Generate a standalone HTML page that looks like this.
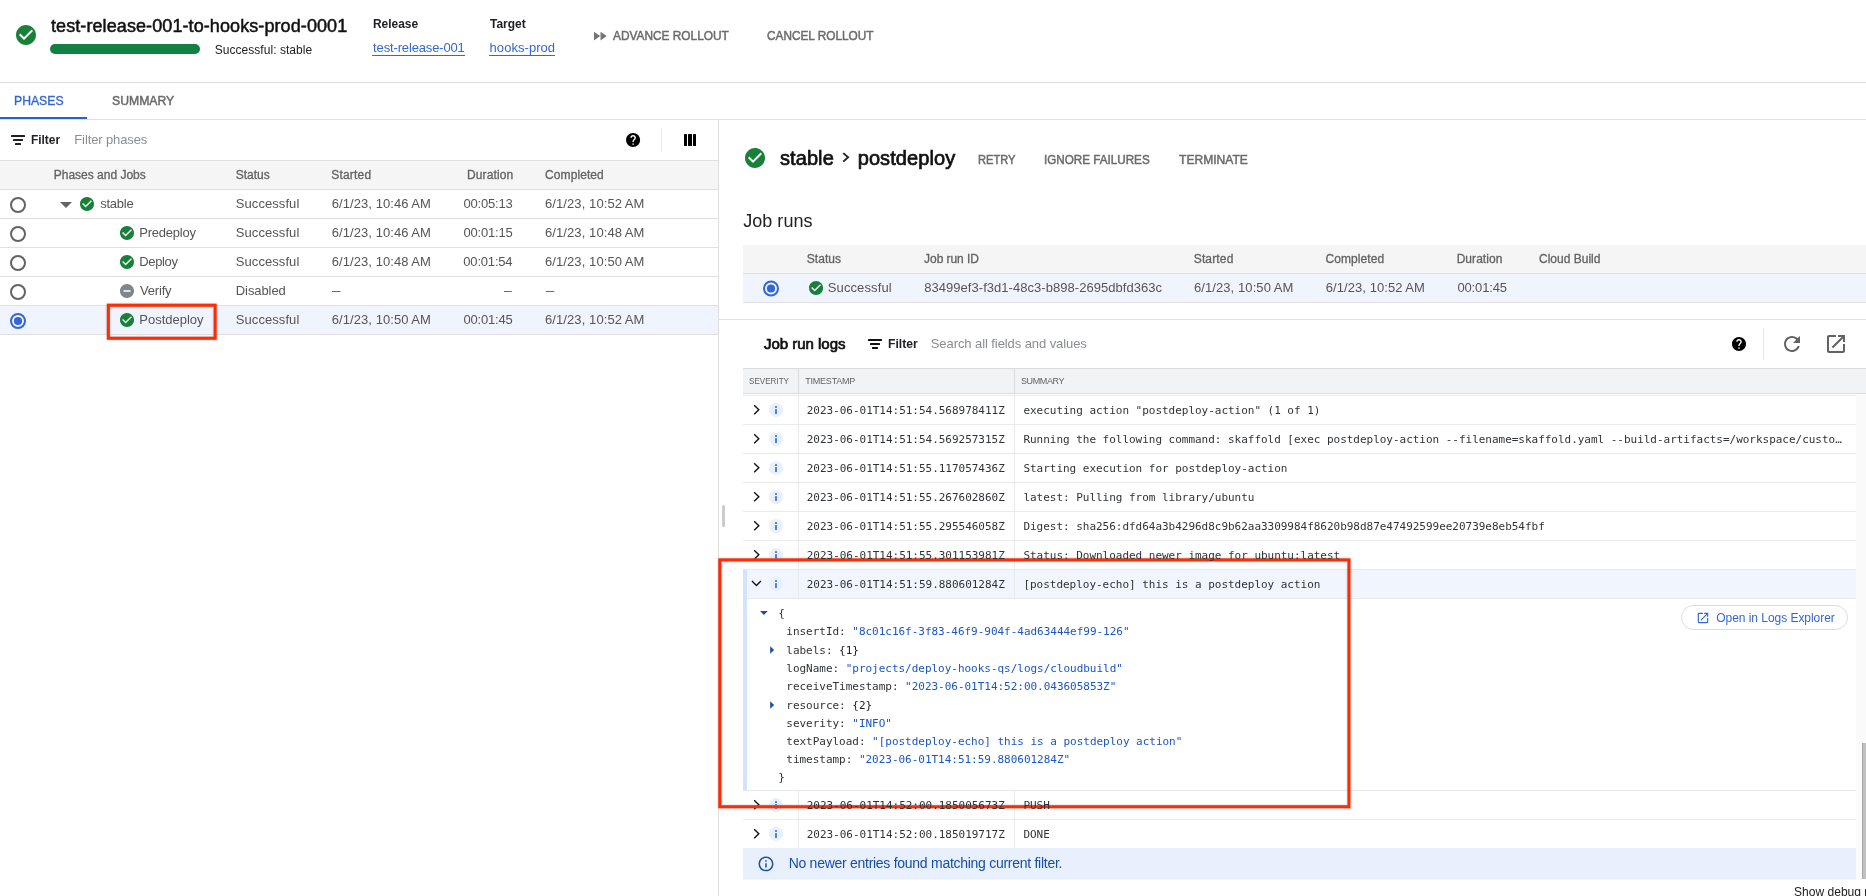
<!DOCTYPE html>
<html lang="en"><head><meta charset="utf-8"><title>Rollout details</title>
<style>
html,body{margin:0;padding:0;background:#fff;}
body{width:1866px;height:896px;overflow:hidden;position:relative;font-family:"Liberation Sans", sans-serif;}
#app{will-change:transform;position:absolute;left:0;top:0;width:1866px;height:896px;overflow:hidden;}
#app div,#app svg,#app span,#app a{position:absolute;}
#app span,#app a{white-space:pre;line-height:20px;text-decoration:none;}
.m{font-family:"DejaVu Sans Mono", "Liberation Mono", monospace;}
</style></head><body><div id="app">
<svg style="left:14px;top:23px" width="25" height="25"><path fill="#188038" transform="translate(0.00 0.00) scale(1.0000)" d="M12 2C6.48 2 2 6.48 2 12s4.48 10 10 10 10-4.48 10-10S17.52 2 12 2zm-2 15l-5-5 1.41-1.41L10 14.17l7.59-7.59L19 8l-9 9z"/></svg>
<div style="left:50px;top:44px;width:150px;height:10px;background:#128042;border-radius:5px;"></div>
<div style="left:372px;top:55px;width:93px;height:1px;background:#3367d6;"></div>
<div style="left:489px;top:55px;width:66px;height:1px;background:#3367d6;"></div>
<svg style="left:591px;top:27px" width="19" height="19"><path fill="#757575" transform="translate(0.05 0.35) scale(0.7292)" d="M4 18l8.5-6L4 6v12zm9-12v12l8.5-6L13 6z"/></svg>
<div style="left:0px;top:82px;width:1866px;height:1px;background:#e0e0e0;"></div>
<div style="left:0px;top:119px;width:1866px;height:1px;background:#e0e0e0;"></div>
<div style="left:0px;top:117px;width:87px;height:2px;background:#2b5ed3;"></div>
<div style="left:718px;top:120px;width:1px;height:776px;background:#e0e0e0;"></div>
<div style="left:11px;top:135px;width:14px;height:2px;background:#202124;border-radius:0.5px;"></div>
<div style="left:13px;top:139px;width:10px;height:2px;background:#202124;border-radius:0.5px;"></div>
<div style="left:15px;top:143px;width:6px;height:2px;background:#202124;border-radius:0.5px;"></div>
<svg style="left:624px;top:131px" width="18" height="18"><path fill="#000" transform="translate(0.70 0.55) scale(0.7000)" d="M12 2C6.48 2 2 6.48 2 12s4.48 10 10 10 10-4.48 10-10S17.52 2 12 2zm1 17h-2v-2h2v2zm2.07-7.75l-.9.92C13.45 12.9 13 13.5 13 15h-2v-.5c0-1.1.45-2.1 1.17-2.83l1.24-1.26c.37-.36.59-.86.59-1.41 0-1.1-.9-2-2-2s-2 .9-2 2H8c0-2.21 1.79-4 4-4s4 1.79 4 4c0 .88-.36 1.68-.93 2.25z"/></svg>
<div style="left:661px;top:128px;width:1px;height:24px;background:#ebebeb;"></div>
<div style="left:684px;top:134px;width:3px;height:12px;background:#000;border-radius:0.5px;"></div>
<div style="left:688px;top:134px;width:4px;height:12px;background:#000;border-radius:0.5px;"></div>
<div style="left:693px;top:134px;width:3px;height:12px;background:#000;border-radius:0.5px;"></div>
<div style="left:0px;top:160px;width:718px;height:30px;background:#f5f5f5;box-sizing:border-box;border-top:1px solid #e0e0e0;border-bottom:1px solid #e0e0e0;"></div>
<div style="left:0px;top:306px;width:718px;height:28px;background:#f0f4fe;"></div>
<div style="left:0px;top:218px;width:718px;height:1px;background:#e0e0e0;"></div>
<div style="left:0px;top:247px;width:718px;height:1px;background:#e0e0e0;"></div>
<div style="left:0px;top:276px;width:718px;height:1px;background:#e0e0e0;"></div>
<div style="left:0px;top:305px;width:718px;height:1px;background:#e0e0e0;"></div>
<div style="left:0px;top:334px;width:718px;height:1px;background:#e0e0e0;"></div>
<svg style="left:9px;top:196px" width="19" height="19"><circle cx="9.00" cy="9.00" r="7" fill="none" stroke="#636363" stroke-width="2"/></svg>
<svg style="left:78px;top:195px" width="18" height="18"><path fill="#188038" transform="translate(0.60 0.60) scale(0.7000)" d="M12 2C6.48 2 2 6.48 2 12s4.48 10 10 10 10-4.48 10-10S17.52 2 12 2zm-2 15l-5-5 1.41-1.41L10 14.17l7.59-7.59L19 8l-9 9z"/></svg>
<svg style="left:9px;top:225px" width="19" height="19"><circle cx="9.00" cy="9.00" r="7" fill="none" stroke="#636363" stroke-width="2"/></svg>
<svg style="left:118px;top:224px" width="18" height="18"><path fill="#188038" transform="translate(0.60 0.60) scale(0.7000)" d="M12 2C6.48 2 2 6.48 2 12s4.48 10 10 10 10-4.48 10-10S17.52 2 12 2zm-2 15l-5-5 1.41-1.41L10 14.17l7.59-7.59L19 8l-9 9z"/></svg>
<svg style="left:9px;top:254px" width="19" height="19"><circle cx="9.00" cy="9.00" r="7" fill="none" stroke="#636363" stroke-width="2"/></svg>
<svg style="left:118px;top:253px" width="18" height="18"><path fill="#188038" transform="translate(0.60 0.60) scale(0.7000)" d="M12 2C6.48 2 2 6.48 2 12s4.48 10 10 10 10-4.48 10-10S17.52 2 12 2zm-2 15l-5-5 1.41-1.41L10 14.17l7.59-7.59L19 8l-9 9z"/></svg>
<svg style="left:9px;top:283px" width="19" height="19"><circle cx="9.00" cy="9.00" r="7" fill="none" stroke="#636363" stroke-width="2"/></svg>
<svg style="left:118px;top:282px" width="18" height="18"><path fill="#80868b" transform="translate(0.60 0.60) scale(0.7000)" d="M12 2C6.48 2 2 6.48 2 12s4.48 10 10 10 10-4.48 10-10S17.52 2 12 2zm5 11H7v-2h10v2z"/></svg>
<svg style="left:9px;top:312px" width="19" height="19"><circle cx="9.00" cy="9.00" r="7" fill="none" stroke="#3367d6" stroke-width="2"/><circle cx="9.00" cy="9.00" r="4.1" fill="#3367d6"/></svg>
<svg style="left:118px;top:311px" width="18" height="18"><path fill="#188038" transform="translate(0.60 0.60) scale(0.7000)" d="M12 2C6.48 2 2 6.48 2 12s4.48 10 10 10 10-4.48 10-10S17.52 2 12 2zm-2 15l-5-5 1.41-1.41L10 14.17l7.59-7.59L19 8l-9 9z"/></svg>
<svg style="left:59px;top:201px" width="15" height="9"><polygon fill="#636363" points="1.00,1.00 13.00,1.00 7.00,7.00"/></svg>
<svg style="left:102px;top:299px;filter:drop-shadow(0.8px 0.8px 1px rgba(70,100,130,.35))" width="120" height="46"><rect x="6.35" y="6.25" width="106.80" height="33.00" fill="none" stroke="#fd2d03" stroke-width="3.1"/></svg>
<svg style="left:743px;top:146px" width="25" height="25"><path fill="#188038" transform="translate(0.00 0.00) scale(1.0000)" d="M12 2C6.48 2 2 6.48 2 12s4.48 10 10 10 10-4.48 10-10S17.52 2 12 2zm-2 15l-5-5 1.41-1.41L10 14.17l7.59-7.59L19 8l-9 9z"/></svg>
<svg style="left:841px;top:151px" width="10" height="13"><polygon fill="#202124" points="1.60,2.70 2.90,1.40 8.50,6.30 2.90,11.20 1.60,9.90 5.70,6.30"/></svg>
<div style="left:743px;top:245px;width:1123px;height:29px;background:#f5f5f5;box-sizing:border-box;border-bottom:1px solid #e0e0e0;"></div>
<div style="left:743px;top:274px;width:1123px;height:29px;background:#f0f4fe;box-sizing:border-box;border-bottom:1px solid #e0e0e0;"></div>
<svg style="left:762px;top:279px" width="19" height="19"><circle cx="9.00" cy="9.50" r="7" fill="none" stroke="#3367d6" stroke-width="2"/><circle cx="9.00" cy="9.50" r="4.1" fill="#3367d6"/></svg>
<svg style="left:807px;top:279px" width="18" height="18"><path fill="#188038" transform="translate(0.65 0.55) scale(0.7000)" d="M12 2C6.48 2 2 6.48 2 12s4.48 10 10 10 10-4.48 10-10S17.52 2 12 2zm-2 15l-5-5 1.41-1.41L10 14.17l7.59-7.59L19 8l-9 9z"/></svg>
<div style="left:719px;top:319px;width:1147px;height:1px;background:#e0e0e0;"></div>
<div style="left:868px;top:339px;width:14px;height:2px;background:#111;border-radius:0.5px;"></div>
<div style="left:870px;top:343px;width:10px;height:2px;background:#111;border-radius:0.5px;"></div>
<div style="left:872px;top:347px;width:6px;height:2px;background:#111;border-radius:0.5px;"></div>
<svg style="left:1730px;top:335px" width="18" height="18"><path fill="#000" transform="translate(0.60 0.55) scale(0.7000)" d="M12 2C6.48 2 2 6.48 2 12s4.48 10 10 10 10-4.48 10-10S17.52 2 12 2zm1 17h-2v-2h2v2zm2.07-7.75l-.9.92C13.45 12.9 13 13.5 13 15h-2v-.5c0-1.1.45-2.1 1.17-2.83l1.24-1.26c.37-.36.59-.86.59-1.41 0-1.1-.9-2-2-2s-2 .9-2 2H8c0-2.21 1.79-4 4-4s4 1.79 4 4c0 .88-.36 1.68-.93 2.25z"/></svg>
<div style="left:1763px;top:328px;width:1px;height:32px;background:#ebebeb;"></div>
<svg style="left:1780px;top:332px" width="25" height="25"><path fill="#636363" transform="translate(0.00 0.00) scale(1.0000)" d="M17.65 6.35C16.2 4.9 14.21 4 12 4c-4.42 0-7.99 3.58-7.99 8s3.57 8 7.99 8c3.73 0 6.84-2.55 7.73-6h-2.08c-.82 2.33-3.04 4-5.65 4-3.31 0-6-2.69-6-6s2.69-6 6-6c1.66 0 3.14.69 4.22 1.78L13 11h7V4l-2.35 2.35z"/></svg>
<svg style="left:1824px;top:332px" width="25" height="25"><path fill="#636363" transform="translate(0.00 0.00) scale(1.0000)" d="M19 19H5V5h7V3H5c-1.11 0-2 .9-2 2v14c0 1.1.89 2 2 2h14c1.1 0 2-.9 2-2v-7h-2v7zM14 3v2h3.59l-9.83 9.83 1.41 1.41L19 6.41V10h2V3h-7z"/></svg>
<div style="left:743px;top:368px;width:1123px;height:26px;background:#f1f3f4;box-sizing:border-box;border-top:1px solid #dadce0;border-bottom:1px solid #dadce0;"></div>
<div style="left:798px;top:369px;width:1px;height:24px;background:#dadce0;"></div>
<div style="left:1014px;top:369px;width:1px;height:24px;background:#dadce0;"></div>
<div style="left:743px;top:395px;width:1113px;height:1px;background:#e8eaed;"></div>
<div style="left:1856px;top:395px;width:10px;height:485px;background:#fafafa;"></div>
<div style="left:722px;top:505px;width:3px;height:22px;background:#cccccc;border-radius:1.5px;"></div>
<div style="left:1862px;top:743px;width:4px;height:136px;background:#c1c1c1;box-sizing:border-box;border-left:1px solid #a6a6a6;"></div>
<div style="left:743px;top:569px;width:1113px;height:29px;background:#f1f5fe;"></div>
<div style="left:743px;top:424px;width:1113px;height:1px;background:#e8eaed;"></div>
<div style="left:798px;top:396px;width:1px;height:28px;background:#e8eaed;"></div>
<div style="left:1014px;top:396px;width:1px;height:28px;background:#e8eaed;"></div>
<svg style="left:752px;top:403px" width="9" height="14"><polyline fill="none" stroke="#111" stroke-width="1.4" points="2.20,2.30 6.80,6.75 2.20,11.20"/></svg>
<div style="left:768.75px;top:402.75px;width:14.5px;height:14.5px;border-radius:50%;background:#e8f0fe"></div>
<div style="left:775px;top:406px;width:2px;height:2px;background:#4a80e4;border-radius:0.5px;"></div>
<div style="left:775px;top:409px;width:2px;height:5px;background:#4a80e4;border-radius:0.5px;"></div>
<div style="left:743px;top:453px;width:1113px;height:1px;background:#e8eaed;"></div>
<div style="left:798px;top:425px;width:1px;height:28px;background:#e8eaed;"></div>
<div style="left:1014px;top:425px;width:1px;height:28px;background:#e8eaed;"></div>
<svg style="left:752px;top:432px" width="9" height="14"><polyline fill="none" stroke="#111" stroke-width="1.4" points="2.20,2.30 6.80,6.75 2.20,11.20"/></svg>
<div style="left:768.75px;top:431.75px;width:14.5px;height:14.5px;border-radius:50%;background:#e8f0fe"></div>
<div style="left:775px;top:435px;width:2px;height:2px;background:#4a80e4;border-radius:0.5px;"></div>
<div style="left:775px;top:438px;width:2px;height:5px;background:#4a80e4;border-radius:0.5px;"></div>
<div style="left:743px;top:482px;width:1113px;height:1px;background:#e8eaed;"></div>
<div style="left:798px;top:454px;width:1px;height:28px;background:#e8eaed;"></div>
<div style="left:1014px;top:454px;width:1px;height:28px;background:#e8eaed;"></div>
<svg style="left:752px;top:461px" width="9" height="14"><polyline fill="none" stroke="#111" stroke-width="1.4" points="2.20,2.30 6.80,6.75 2.20,11.20"/></svg>
<div style="left:768.75px;top:460.75px;width:14.5px;height:14.5px;border-radius:50%;background:#e8f0fe"></div>
<div style="left:775px;top:464px;width:2px;height:2px;background:#4a80e4;border-radius:0.5px;"></div>
<div style="left:775px;top:467px;width:2px;height:5px;background:#4a80e4;border-radius:0.5px;"></div>
<div style="left:743px;top:511px;width:1113px;height:1px;background:#e8eaed;"></div>
<div style="left:798px;top:483px;width:1px;height:28px;background:#e8eaed;"></div>
<div style="left:1014px;top:483px;width:1px;height:28px;background:#e8eaed;"></div>
<svg style="left:752px;top:490px" width="9" height="14"><polyline fill="none" stroke="#111" stroke-width="1.4" points="2.20,2.30 6.80,6.75 2.20,11.20"/></svg>
<div style="left:768.75px;top:489.75px;width:14.5px;height:14.5px;border-radius:50%;background:#e8f0fe"></div>
<div style="left:775px;top:493px;width:2px;height:2px;background:#4a80e4;border-radius:0.5px;"></div>
<div style="left:775px;top:496px;width:2px;height:5px;background:#4a80e4;border-radius:0.5px;"></div>
<div style="left:743px;top:540px;width:1113px;height:1px;background:#e8eaed;"></div>
<div style="left:798px;top:512px;width:1px;height:28px;background:#e8eaed;"></div>
<div style="left:1014px;top:512px;width:1px;height:28px;background:#e8eaed;"></div>
<svg style="left:752px;top:519px" width="9" height="14"><polyline fill="none" stroke="#111" stroke-width="1.4" points="2.20,2.30 6.80,6.75 2.20,11.20"/></svg>
<div style="left:768.75px;top:518.75px;width:14.5px;height:14.5px;border-radius:50%;background:#e8f0fe"></div>
<div style="left:775px;top:522px;width:2px;height:2px;background:#4a80e4;border-radius:0.5px;"></div>
<div style="left:775px;top:525px;width:2px;height:5px;background:#4a80e4;border-radius:0.5px;"></div>
<div style="left:743px;top:569px;width:1113px;height:1px;background:#e8eaed;"></div>
<div style="left:798px;top:541px;width:1px;height:28px;background:#e8eaed;"></div>
<div style="left:1014px;top:541px;width:1px;height:28px;background:#e8eaed;"></div>
<svg style="left:752px;top:548px" width="9" height="14"><polyline fill="none" stroke="#111" stroke-width="1.4" points="2.20,2.30 6.80,6.75 2.20,11.20"/></svg>
<div style="left:768.75px;top:547.75px;width:14.5px;height:14.5px;border-radius:50%;background:#e8f0fe"></div>
<div style="left:775px;top:551px;width:2px;height:2px;background:#4a80e4;border-radius:0.5px;"></div>
<div style="left:775px;top:554px;width:2px;height:5px;background:#4a80e4;border-radius:0.5px;"></div>
<div style="left:743px;top:598px;width:1113px;height:1px;background:#e8eaed;"></div>
<div style="left:798px;top:570px;width:1px;height:28px;background:#e8eaed;"></div>
<div style="left:1014px;top:570px;width:1px;height:28px;background:#e8eaed;"></div>
<svg style="left:750px;top:579px" width="13" height="9"><polyline fill="none" stroke="#111" stroke-width="1.4" points="2.00,2.00 6.45,6.50 10.90,2.00"/></svg>
<div style="left:768.75px;top:576.75px;width:14.5px;height:14.5px;border-radius:50%;background:#e8f0fe"></div>
<div style="left:775px;top:580px;width:2px;height:2px;background:#4a80e4;border-radius:0.5px;"></div>
<div style="left:775px;top:583px;width:2px;height:5px;background:#4a80e4;border-radius:0.5px;"></div>
<div style="left:743px;top:819px;width:1113px;height:1px;background:#e8eaed;"></div>
<div style="left:798px;top:791px;width:1px;height:28px;background:#e8eaed;"></div>
<div style="left:1014px;top:791px;width:1px;height:28px;background:#e8eaed;"></div>
<svg style="left:752px;top:798px" width="9" height="14"><polyline fill="none" stroke="#111" stroke-width="1.4" points="2.20,2.30 6.80,6.75 2.20,11.20"/></svg>
<div style="left:768.75px;top:797.75px;width:14.5px;height:14.5px;border-radius:50%;background:#e8f0fe"></div>
<div style="left:775px;top:801px;width:2px;height:2px;background:#4a80e4;border-radius:0.5px;"></div>
<div style="left:775px;top:804px;width:2px;height:5px;background:#4a80e4;border-radius:0.5px;"></div>
<div style="left:743px;top:848px;width:1113px;height:1px;background:#e8eaed;"></div>
<div style="left:798px;top:820px;width:1px;height:28px;background:#e8eaed;"></div>
<div style="left:1014px;top:820px;width:1px;height:28px;background:#e8eaed;"></div>
<svg style="left:752px;top:827px" width="9" height="14"><polyline fill="none" stroke="#111" stroke-width="1.4" points="2.20,2.30 6.80,6.75 2.20,11.20"/></svg>
<div style="left:768.75px;top:826.75px;width:14.5px;height:14.5px;border-radius:50%;background:#e8f0fe"></div>
<div style="left:775px;top:830px;width:2px;height:2px;background:#4a80e4;border-radius:0.5px;"></div>
<div style="left:775px;top:833px;width:2px;height:5px;background:#4a80e4;border-radius:0.5px;"></div>
<div style="left:743px;top:790px;width:1113px;height:1px;background:#e8eaed;"></div>
<div style="left:743px;top:570px;width:4px;height:220px;background:#d2e3fc;"></div>
<svg style="left:759px;top:610px" width="10" height="7"><polygon fill="#174ea6" points="1.00,1.10 8.80,1.10 4.90,5.00"/></svg>
<svg style="left:769px;top:645px" width="7" height="10"><polygon fill="#174ea6" points="1.20,1.20 5.10,5.00 1.20,8.80"/></svg>
<svg style="left:769px;top:700px" width="7" height="10"><polygon fill="#174ea6" points="1.20,1.20 5.10,5.00 1.20,8.80"/></svg>
<div style="left:1681px;top:605px;width:165px;height:23px;border:1px solid #dadce0;border-radius:13px;background:#fff"></div>
<svg style="left:1696px;top:611px" width="15" height="15"><path fill="#3367d6" transform="translate(0.00 0.00) scale(0.5833)" d="M19 19H5V5h7V3H5c-1.11 0-2 .9-2 2v14c0 1.1.89 2 2 2h14c1.1 0 2-.9 2-2v-7h-2v7zM14 3v2h3.59l-9.83 9.83 1.41 1.41L19 6.41V10h2V3h-7z"/></svg>
<div style="left:743px;top:848px;width:1113px;height:31px;background:#e8f0fe;"></div>
<div style="left:743px;top:879px;width:1113px;height:1px;background:#f1f6fe;"></div>
<svg style="left:757px;top:855px" width="19" height="19"><path fill="#174ea6" transform="translate(0.10 0.00) scale(0.7417)" d="M11 7h2v2h-2zm0 4h2v6h-2zm1-9C6.48 2 2 6.48 2 12s4.48 10 10 10 10-4.48 10-10S17.52 2 12 2zm0 18c-4.41 0-8-3.59-8-8s3.59-8 8-8 8 3.59 8 8-3.59 8-8 8z"/></svg>
<svg style="left:714px;top:554px;filter:drop-shadow(0.8px 0.8px 1px rgba(70,100,130,.35))" width="642" height="260"><rect x="5.85" y="5.90" width="629.10" height="246.85" fill="none" stroke="#fd2d03" stroke-width="3.1"/></svg>
<span style="left:50.95px;top:16px;font-size:18px;color:#111;-webkit-text-stroke:0.5px #111;letter-spacing:0.092px;">test-release-001-to-hooks-prod-0001</span>
<span style="left:214.73px;top:40px;font-size:12px;color:#202124;letter-spacing:0.040px;">Successful: stable</span>
<span style="left:372.67px;top:14px;font-size:13px;color:#202124;font-weight:700;transform:scaleX(0.9183);transform-origin:0 0;">Release</span>
<a style="left:373.10px;top:38px;font-size:13px;color:#3367d6;letter-spacing:-0.146px;">test-release-001</a>
<span style="left:489.99px;top:14px;font-size:13px;color:#202124;font-weight:700;transform:scaleX(0.9208);transform-origin:0 0;">Target</span>
<a style="left:489.59px;top:38px;font-size:13px;color:#3367d6;letter-spacing:0.054px;">hooks-prod</a>
<span style="left:612.91px;top:26px;font-size:13px;color:#6b6b6b;-webkit-text-stroke:0.5px #6b6b6b;transform:scaleX(0.9130);transform-origin:0 0;">ADVANCE ROLLOUT</span>
<span style="left:767.11px;top:26px;font-size:13px;color:#6b6b6b;-webkit-text-stroke:0.5px #6b6b6b;transform:scaleX(0.9081);transform-origin:0 0;">CANCEL ROLLOUT</span>
<span style="left:13.85px;top:91px;font-size:13px;color:#3367d6;-webkit-text-stroke:0.35px #3367d6;transform:scaleX(0.9392);transform-origin:0 0;">PHASES</span>
<span style="left:111.54px;top:91px;font-size:13px;color:#6b6b6b;-webkit-text-stroke:0.5px #6b6b6b;transform:scaleX(0.9395);transform-origin:0 0;">SUMMARY</span>
<span style="left:31.49px;top:130px;font-size:13px;color:#202124;font-weight:700;transform:scaleX(0.9141);transform-origin:0 0;">Filter</span>
<span style="left:74.31px;top:130px;font-size:13px;color:#8a8d90;letter-spacing:-0.114px;">Filter phases</span>
<span style="left:53.75px;top:165px;font-size:12px;color:#636363;-webkit-text-stroke:0.3px #636363;letter-spacing:-0.003px;">Phases and Jobs</span>
<span style="left:235.73px;top:165px;font-size:12px;color:#636363;-webkit-text-stroke:0.3px #636363;letter-spacing:0.010px;">Status</span>
<span style="left:331.24px;top:165px;font-size:12px;color:#636363;-webkit-text-stroke:0.3px #636363;letter-spacing:0.200px;">Started</span>
<span style="left:466.93px;top:165px;font-size:12px;color:#636363;-webkit-text-stroke:0.3px #636363;letter-spacing:0.130px;">Duration</span>
<span style="left:545.05px;top:165px;font-size:12px;color:#636363;-webkit-text-stroke:0.3px #636363;letter-spacing:0.082px;">Completed</span>
<span style="left:100.16px;top:194px;font-size:13px;color:#555555;letter-spacing:-0.225px;">stable</span>
<span style="left:235.75px;top:194px;font-size:13px;color:#555555;letter-spacing:0.078px;">Successful</span>
<span style="left:331.72px;top:194px;font-size:13px;color:#555555;letter-spacing:0.075px;">6/1/23, 10:46 AM</span>
<span style="left:463.46px;top:194px;font-size:13px;color:#555555;letter-spacing:-0.172px;">00:05:13</span>
<span style="left:544.98px;top:194px;font-size:13px;color:#555555;letter-spacing:0.093px;">6/1/23, 10:52 AM</span>
<span style="left:139.31px;top:223px;font-size:13px;color:#555555;letter-spacing:-0.227px;">Predeploy</span>
<span style="left:235.75px;top:223px;font-size:13px;color:#555555;letter-spacing:0.078px;">Successful</span>
<span style="left:331.72px;top:223px;font-size:13px;color:#555555;letter-spacing:0.075px;">6/1/23, 10:46 AM</span>
<span style="left:463.46px;top:223px;font-size:13px;color:#555555;letter-spacing:-0.173px;">00:01:15</span>
<span style="left:544.98px;top:223px;font-size:13px;color:#555555;letter-spacing:0.093px;">6/1/23, 10:48 AM</span>
<span style="left:139.20px;top:252px;font-size:13px;color:#555555;letter-spacing:-0.330px;">Deploy</span>
<span style="left:235.75px;top:252px;font-size:13px;color:#555555;letter-spacing:0.078px;">Successful</span>
<span style="left:331.72px;top:252px;font-size:13px;color:#555555;letter-spacing:0.075px;">6/1/23, 10:48 AM</span>
<span style="left:463.30px;top:252px;font-size:13px;color:#555555;letter-spacing:-0.186px;">00:01:54</span>
<span style="left:544.98px;top:252px;font-size:13px;color:#555555;letter-spacing:0.093px;">6/1/23, 10:50 AM</span>
<span style="left:140.06px;top:281px;font-size:13px;color:#555555;letter-spacing:-0.202px;">Verify</span>
<span style="left:235.77px;top:281px;font-size:13px;color:#555555;letter-spacing:-0.079px;">Disabled</span>
<span style="left:331.94px;top:281px;font-size:13px;color:#555555;transform:scaleX(0.6535);transform-origin:0 0;">—</span>
<span style="left:504.05px;top:281px;font-size:13px;color:#555555;transform:scaleX(0.5957);transform-origin:0 0;">—</span>
<span style="left:545.62px;top:281px;font-size:13px;color:#555555;transform:scaleX(0.6361);transform-origin:0 0;">—</span>
<span style="left:139.31px;top:310px;font-size:13px;color:#555555;letter-spacing:-0.011px;">Postdeploy</span>
<span style="left:235.75px;top:310px;font-size:13px;color:#555555;letter-spacing:0.078px;">Successful</span>
<span style="left:331.72px;top:310px;font-size:13px;color:#555555;letter-spacing:0.075px;">6/1/23, 10:50 AM</span>
<span style="left:463.46px;top:310px;font-size:13px;color:#555555;letter-spacing:-0.173px;">00:01:45</span>
<span style="left:544.98px;top:310px;font-size:13px;color:#555555;letter-spacing:0.093px;">6/1/23, 10:52 AM</span>
<span style="left:779.96px;top:148px;font-size:20px;color:#111;-webkit-text-stroke:0.7px #111;letter-spacing:0.088px;">stable</span>
<span style="left:857.73px;top:148px;font-size:20px;color:#111;-webkit-text-stroke:0.7px #111;letter-spacing:0.076px;">postdeploy</span>
<span style="left:977.84px;top:150px;font-size:13px;color:#6b6b6b;-webkit-text-stroke:0.5px #6b6b6b;transform:scaleX(0.8555);transform-origin:0 0;">RETRY</span>
<span style="left:1044.30px;top:150px;font-size:13px;color:#6b6b6b;-webkit-text-stroke:0.5px #6b6b6b;transform:scaleX(0.8973);transform-origin:0 0;">IGNORE FAILURES</span>
<span style="left:1178.78px;top:150px;font-size:13px;color:#6b6b6b;-webkit-text-stroke:0.5px #6b6b6b;transform:scaleX(0.9291);transform-origin:0 0;">TERMINATE</span>
<span style="left:743.17px;top:211px;font-size:18px;color:#202124;letter-spacing:0.045px;">Job runs</span>
<span style="left:806.73px;top:249px;font-size:12px;color:#636363;-webkit-text-stroke:0.3px #636363;letter-spacing:0.055px;">Status</span>
<span style="left:924.07px;top:249px;font-size:12px;color:#636363;-webkit-text-stroke:0.3px #636363;letter-spacing:-0.051px;">Job run ID</span>
<span style="left:1193.72px;top:249px;font-size:12px;color:#636363;-webkit-text-stroke:0.3px #636363;letter-spacing:0.156px;">Started</span>
<span style="left:1325.48px;top:249px;font-size:12px;color:#636363;-webkit-text-stroke:0.3px #636363;letter-spacing:0.077px;">Completed</span>
<span style="left:1456.65px;top:249px;font-size:12px;color:#636363;-webkit-text-stroke:0.3px #636363;letter-spacing:0.055px;">Duration</span>
<span style="left:1539.05px;top:249px;font-size:12px;color:#636363;-webkit-text-stroke:0.3px #636363;letter-spacing:-0.002px;">Cloud Build</span>
<span style="left:827.76px;top:278px;font-size:13px;color:#555555;letter-spacing:0.116px;">Successful</span>
<span style="left:924.20px;top:278px;font-size:13px;color:#555555;letter-spacing:0.044px;">83499ef3-f3d1-48c3-b898-2695dbfd363c</span>
<span style="left:1193.98px;top:278px;font-size:13px;color:#555555;letter-spacing:0.084px;">6/1/23, 10:50 AM</span>
<span style="left:1325.72px;top:278px;font-size:13px;color:#555555;letter-spacing:0.075px;">6/1/23, 10:52 AM</span>
<span style="left:1457.46px;top:278px;font-size:13px;color:#555555;letter-spacing:-0.147px;">00:01:45</span>
<span style="left:764.00px;top:334px;font-size:15px;color:#111;-webkit-text-stroke:0.7px #111;letter-spacing:-0.024px;">Job run logs</span>
<span style="left:888.31px;top:334px;font-size:13px;color:#202124;font-weight:700;transform:scaleX(0.9355);transform-origin:0 0;">Filter</span>
<span style="left:930.75px;top:334px;font-size:13px;color:#8a8d90;letter-spacing:-0.080px;">Search all fields and values</span>
<span style="left:749.37px;top:371px;font-size:9px;color:#636363;transform:scaleX(0.8976);transform-origin:0 0;">SEVERITY</span>
<span style="left:805.18px;top:371px;font-size:9px;color:#636363;letter-spacing:-0.206px;">TIMESTAMP</span>
<span style="left:1021.02px;top:371px;font-size:9px;color:#636363;letter-spacing:-0.397px;">SUMMARY</span>
<span class="m" style="left:806.75px;top:401px;font-size:11px;color:#303336;letter-spacing:-0.023px;">2023-06-01T14:51:54.568978411Z</span>
<span class="m" style="left:1023.40px;top:401px;font-size:11px;color:#303336;letter-spacing:-0.023px;">executing action "postdeploy-action" (1 of 1)</span>
<span class="m" style="left:806.75px;top:430px;font-size:11px;color:#303336;letter-spacing:-0.023px;">2023-06-01T14:51:54.569257315Z</span>
<span class="m" style="left:1023.40px;top:430px;font-size:11px;color:#303336;letter-spacing:-0.023px;">Running the following command: skaffold [exec postdeploy-action --filename=skaffold.yaml --build-artifacts=/workspace/custo…</span>
<span class="m" style="left:806.75px;top:459px;font-size:11px;color:#303336;letter-spacing:-0.023px;">2023-06-01T14:51:55.117057436Z</span>
<span class="m" style="left:1023.40px;top:459px;font-size:11px;color:#303336;letter-spacing:-0.023px;">Starting execution for postdeploy-action</span>
<span class="m" style="left:806.75px;top:488px;font-size:11px;color:#303336;letter-spacing:-0.023px;">2023-06-01T14:51:55.267602860Z</span>
<span class="m" style="left:1023.40px;top:488px;font-size:11px;color:#303336;letter-spacing:-0.023px;">latest: Pulling from library/ubuntu</span>
<span class="m" style="left:806.75px;top:517px;font-size:11px;color:#303336;letter-spacing:-0.023px;">2023-06-01T14:51:55.295546058Z</span>
<span class="m" style="left:1023.40px;top:517px;font-size:11px;color:#303336;letter-spacing:-0.023px;">Digest: sha256:dfd64a3b4296d8c9b62aa3309984f8620b98d87e47492599ee20739e8eb54fbf</span>
<span class="m" style="left:806.75px;top:546px;font-size:11px;color:#303336;letter-spacing:-0.023px;">2023-06-01T14:51:55.301153981Z</span>
<span class="m" style="left:1023.40px;top:546px;font-size:11px;color:#303336;letter-spacing:-0.023px;">Status: Downloaded newer image for ubuntu:latest</span>
<span class="m" style="left:806.75px;top:575px;font-size:11px;color:#303336;letter-spacing:-0.023px;">2023-06-01T14:51:59.880601284Z</span>
<span class="m" style="left:1023.40px;top:575px;font-size:11px;color:#303336;letter-spacing:-0.023px;">[postdeploy-echo] this is a postdeploy action</span>
<span class="m" style="left:806.75px;top:796px;font-size:11px;color:#303336;letter-spacing:-0.023px;">2023-06-01T14:52:00.185005673Z</span>
<span class="m" style="left:1023.40px;top:796px;font-size:11px;color:#303336;letter-spacing:-0.023px;">PUSH</span>
<span class="m" style="left:806.75px;top:825px;font-size:11px;color:#303336;letter-spacing:-0.023px;">2023-06-01T14:52:00.185019717Z</span>
<span class="m" style="left:1023.40px;top:825px;font-size:11px;color:#303336;letter-spacing:-0.023px;">DONE</span>
<span class="m" style="left:778.30px;top:604px;font-size:11px;color:#303336;letter-spacing:-0.023px;">{</span>
<span class="m" style="left:786.30px;top:622px;font-size:11px;color:#303336;letter-spacing:-0.023px;">insertId:</span>
<span class="m" style="left:852.30px;top:622px;font-size:11px;color:#1a56c4;letter-spacing:-0.023px;">"8c01c16f-3f83-46f9-904f-4ad63444ef99-126"</span>
<span class="m" style="left:786.30px;top:641px;font-size:11px;color:#303336;letter-spacing:-0.023px;">labels:</span>
<span class="m" style="left:839.10px;top:641px;font-size:11px;color:#202124;letter-spacing:-0.023px;">{1}</span>
<span class="m" style="left:786.30px;top:659px;font-size:11px;color:#303336;letter-spacing:-0.023px;">logName:</span>
<span class="m" style="left:845.70px;top:659px;font-size:11px;color:#1a56c4;letter-spacing:-0.023px;">"projects/deploy-hooks-qs/logs/cloudbuild"</span>
<span class="m" style="left:786.30px;top:677px;font-size:11px;color:#303336;letter-spacing:-0.023px;">receiveTimestamp:</span>
<span class="m" style="left:905.10px;top:677px;font-size:11px;color:#1a56c4;letter-spacing:-0.023px;">"2023-06-01T14:52:00.043605853Z"</span>
<span class="m" style="left:786.30px;top:696px;font-size:11px;color:#303336;letter-spacing:-0.023px;">resource:</span>
<span class="m" style="left:852.30px;top:696px;font-size:11px;color:#202124;letter-spacing:-0.023px;">{2}</span>
<span class="m" style="left:786.30px;top:714px;font-size:11px;color:#303336;letter-spacing:-0.023px;">severity:</span>
<span class="m" style="left:852.30px;top:714px;font-size:11px;color:#1a56c4;letter-spacing:-0.023px;">"INFO"</span>
<span class="m" style="left:786.30px;top:732px;font-size:11px;color:#303336;letter-spacing:-0.023px;">textPayload:</span>
<span class="m" style="left:872.10px;top:732px;font-size:11px;color:#1a56c4;letter-spacing:-0.023px;">"[postdeploy-echo] this is a postdeploy action"</span>
<span class="m" style="left:786.30px;top:750px;font-size:11px;color:#303336;letter-spacing:-0.023px;">timestamp:</span>
<span class="m" style="left:858.90px;top:750px;font-size:11px;color:#1a56c4;letter-spacing:-0.023px;">"2023-06-01T14:51:59.880601284Z"</span>
<span class="m" style="left:778.30px;top:768px;font-size:11px;color:#303336;letter-spacing:-0.023px;">}</span>
<span style="left:1716.25px;top:608px;font-size:12px;color:#3367d6;letter-spacing:-0.042px;">Open in Logs Explorer</span>
<span style="left:788.67px;top:853px;font-size:14px;color:#174ea6;letter-spacing:-0.274px;">No newer entries found matching current filter.</span>
<span style="left:1794.40px;top:882px;font-size:13px;color:#202124;transform:scaleX(0.9270);transform-origin:0 0;">Show debug panel</span>
</div></body></html>
